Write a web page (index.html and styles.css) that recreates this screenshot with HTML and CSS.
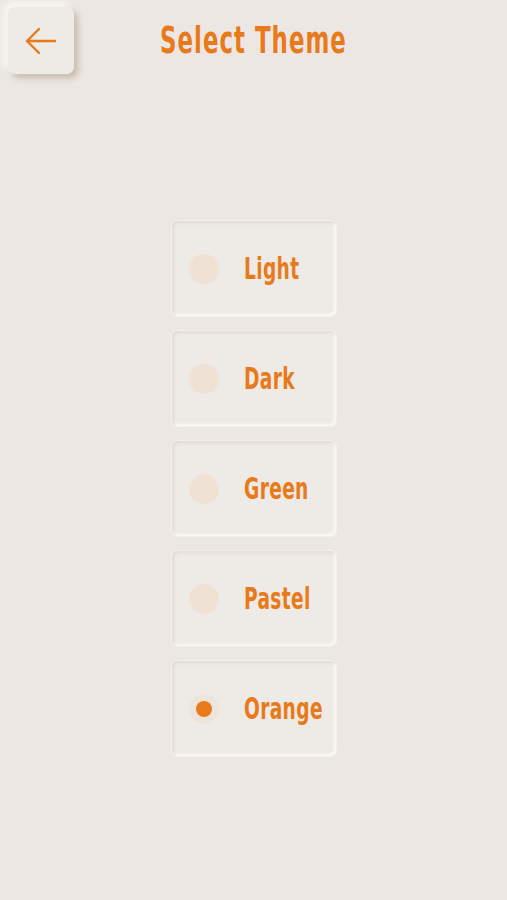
FILE: index.html
```html
<!DOCTYPE html>
<html>
<head>
    <link rel="stylesheet" href="styles.css">
</head>
<body>
    <div class="page">
        <!-- Шапка -->
        <div class="header">
            <button class="back-btn">
                <svg width="34" height="34" viewBox="0 0 34 34" fill="none" stroke="#e87a1c" stroke-width="2.4" stroke-linecap="round" stroke-linejoin="round">
                    <path d="M31 17H3"/>
                    <path d="M15 5L3 17l12 12"/>
                </svg>
            </button>
            <div class="title">Select Theme</div>
            <div></div>
        </div>

        <!-- Список тем -->
        <div class="theme-list">
            <div class="theme-card">
                <span class="radio"></span>
                <span class="theme-name">Light</span>
            </div>
            <div class="theme-card">
                <span class="radio"></span>
                <span class="theme-name">Dark</span>
            </div>
            <div class="theme-card">
                <span class="radio"></span>
                <span class="theme-name">Green</span>
            </div>
            <div class="theme-card">
                <span class="radio"></span>
                <span class="theme-name">Pastel</span>
            </div>
            <div class="theme-card">
                <span class="radio checked"></span>
                <span class="theme-name">Orange</span>
            </div>
        </div>
    </div>
</body>
</html>
```

FILE: styles.css
```css
* {
    margin: 0;
    padding: 0;
    box-sizing: border-box;
}

body {
    background: #ece7e2;
    color: #e87a1c;
    font-family: "DejaVu Sans Condensed", "DejaVu Sans", sans-serif;
    min-height: 100vh;
}

.page {
    min-height: 100vh;
}

.header {
    display: grid;
    grid-template-columns: 1fr auto 1fr;
    align-items: center;
    padding: 7px 8px;
}

.back-btn {
    width: 66px;
    height: 67px;
    border: none;
    border-radius: 7px;
    background: #eeeae5;
    display: flex;
    align-items: center;
    justify-content: center;
    box-shadow: 4px 4px 6px rgba(150, 135, 110, 0.45), -4px -4px 7px #fbf9f6;
    cursor: pointer;
}

/* узкий шрифт имитируем сжатием */
.title {
    font-size: 38px;
    font-weight: 700;
    letter-spacing: 1.5px;
    transform: scaleX(0.67);
    margin-top: -2px;
}

/* Карточки тем */
.theme-list {
    display: flex;
    flex-direction: column;
    align-items: center;
    gap: 13px;
    margin-top: 139px;
    padding-left: 1px;
}

.theme-card {
    width: 166px;
    height: 97px;
    display: flex;
    align-items: center;
    padding-left: 17px;
    border-radius: 6px;
    background: #eeeae5;
    border: 1px solid #f3f0ec;
    box-shadow: inset 2px 2px 3px rgba(170, 155, 135, 0.18), inset -2px -2px 3px rgba(255, 255, 255, 0.7);
}

.radio {
    flex-shrink: 0;
    width: 30px;
    height: 30px;
    border-radius: 50%;
    background: #efe2d5;
    margin-right: 25px;
    display: flex;
    align-items: center;
    justify-content: center;
}

.radio.checked {
    background: #ede5dc;
}

.radio.checked::after {
    content: "";
    width: 16px;
    height: 16px;
    border-radius: 50%;
    background: #e87a1c;
}

.theme-name {
    display: inline-block;
    font-size: 30px;
    font-weight: 700;
    letter-spacing: 0.5px;
    transform: scaleX(0.69);
    transform-origin: left center;
    white-space: nowrap;
}
```
